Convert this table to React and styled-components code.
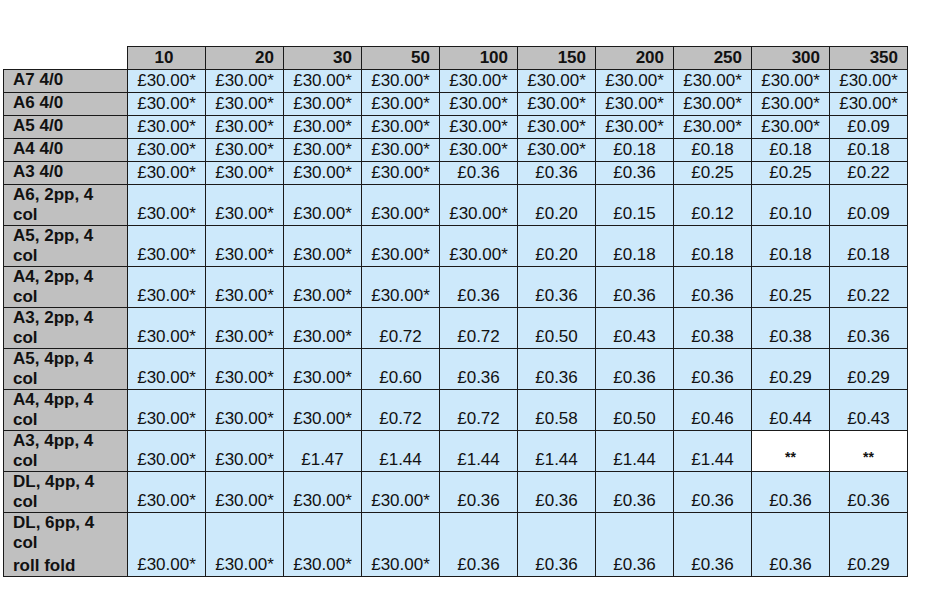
import styled, { createGlobalStyle } from "styled-components";

const GlobalStyle = createGlobalStyle`
  body {
    margin: 0;
    background: #ffffff;
    font-family: "Liberation Sans", Arial, sans-serif;
  }
`;

const Page = styled.div`
  padding: 46px 0 0 3px;
`;

const Table = styled.table`
  border-collapse: collapse;
  table-layout: fixed;
  width: 904px;
  font-size: 17px;
  line-height: 20px;
  color: #111;
`;

const LabelCol = styled.col`
  width: 124px;
`;

const DataCol = styled.col`
  width: 78px;
`;

const Blank = styled.th`
  padding: 0;
  border: none;
  background: #fff;
`;

const HeadCell = styled.th`
  height: 22px;
  padding: 0 9px 0 4px;
  background: #c0c0c0;
  border: 1px solid #1a1a1a;
  font-weight: bold;
  text-align: ${(p) => (p.$center ? "center" : "right")};
  vertical-align: middle;
`;

const Label = styled.th`
  height: ${(p) => p.$height}px;
  padding: 0 4px 0 9px;
  background: #c0c0c0;
  border: 1px solid #1a1a1a;
  font-weight: bold;
  text-align: left;
  vertical-align: top;
`;

const Line = styled.div`
  margin-top: ${(p) => p.$gap || 0}px;
  white-space: nowrap;
`;

const Cell = styled.td`
  padding: 0 2px ${(p) => (p.$empty ? "4px" : "1px")};
  background: ${(p) => (p.$empty ? "#ffffff" : "#cde9fb")};
  border: 1px solid #1a1a1a;
  text-align: center;
  vertical-align: bottom;
  white-space: nowrap;
  font-size: ${(p) => (p.$empty ? "14px" : "17px")};
  font-weight: ${(p) => (p.$empty ? "bold" : "normal")};
`;

const cols = ["10", "20", "30", "50", "100", "150", "200", "250", "300", "350"];

const F = "£30.00*";
const fill = (n) => Array(n).fill(F);

const rows = [
  { label: ["A7 4/0"], h: 22, vals: fill(10) },
  { label: ["A6 4/0"], h: 22, vals: fill(10) },
  { label: ["A5 4/0"], h: 22, vals: [...fill(9), "£0.09"] },
  { label: ["A4 4/0"], h: 22, vals: [...fill(6), "£0.18", "£0.18", "£0.18", "£0.18"] },
  { label: ["A3 4/0"], h: 22, vals: [...fill(4), "£0.36", "£0.36", "£0.36", "£0.25", "£0.25", "£0.22"] },
  { label: ["A6, 2pp, 4", "col"], h: 40, vals: [...fill(5), "£0.20", "£0.15", "£0.12", "£0.10", "£0.09"] },
  { label: ["A5, 2pp, 4", "col"], h: 40, vals: [...fill(5), "£0.20", "£0.18", "£0.18", "£0.18", "£0.18"] },
  { label: ["A4, 2pp, 4", "col"], h: 40, vals: [...fill(4), "£0.36", "£0.36", "£0.36", "£0.36", "£0.25", "£0.22"] },
  { label: ["A3, 2pp, 4", "col"], h: 40, vals: [...fill(3), "£0.72", "£0.72", "£0.50", "£0.43", "£0.38", "£0.38", "£0.36"] },
  { label: ["A5, 4pp, 4", "col"], h: 40, vals: [...fill(3), "£0.60", "£0.36", "£0.36", "£0.36", "£0.36", "£0.29", "£0.29"] },
  { label: ["A4, 4pp, 4", "col"], h: 40, vals: [...fill(3), "£0.72", "£0.72", "£0.58", "£0.50", "£0.46", "£0.44", "£0.43"] },
  { label: ["A3, 4pp, 4", "col"], h: 40, vals: [...fill(2), "£1.47", "£1.44", "£1.44", "£1.44", "£1.44", "£1.44", "**", "**"] },
  { label: ["DL, 4pp, 4", "col"], h: 40, vals: [...fill(4), "£0.36", "£0.36", "£0.36", "£0.36", "£0.36", "£0.36"] },
  { label: ["DL, 6pp, 4", "col", "roll fold"], h: 63, vals: [...fill(4), "£0.36", "£0.36", "£0.36", "£0.36", "£0.36", "£0.29"] },
];

const App = () => {
  return (
    <Page>
      <GlobalStyle />
      <Table>
        <colgroup>
          <LabelCol />
          {cols.map((c) => (
            <DataCol key={c} />
          ))}
        </colgroup>
        <thead>
          <tr>
            <Blank />
            {cols.map((c, i) => (
              <HeadCell key={c} $center={i === 0}>
                {c}
              </HeadCell>
            ))}
          </tr>
        </thead>
        <tbody>
          {rows.map((r) => (
            <tr key={r.label.join(" ")}>
              <Label $height={r.h}>
                {r.label.map((l, i) => (
                  <Line key={l} $gap={i === 2 ? 3 : 0}>
                    {l}
                  </Line>
                ))}
              </Label>
              {r.vals.map((v, i) => (
                <Cell key={i} $empty={v === "**"}>
                  {v}
                </Cell>
              ))}
            </tr>
          ))}
        </tbody>
      </Table>
    </Page>
  );
};

export default App;
